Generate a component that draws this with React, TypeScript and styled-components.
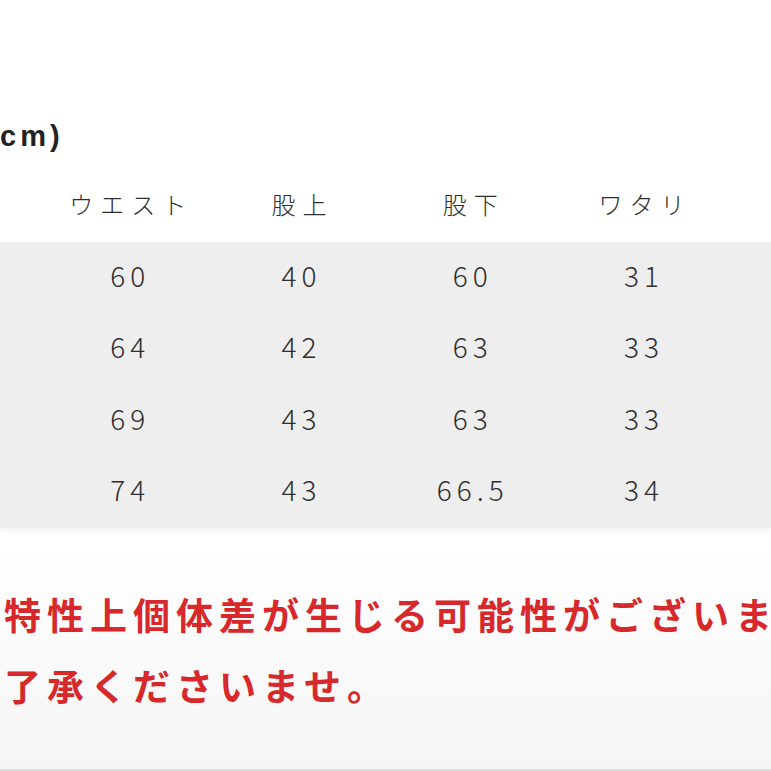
import React from "react";
import styled, { createGlobalStyle } from "styled-components";

const Global = createGlobalStyle`
  html, body { margin: 0; padding: 0; background: #ffffff; }
  body { font-family: "Noto Sans CJK JP", "Noto Sans", sans-serif; color: #333; }
`;

const Page = styled.div`
  width: 771px;
  height: 771px;
  overflow: hidden;
  display: flex;
  flex-direction: column;
  background: linear-gradient(to bottom, #ffffff 0px, #ffffff 540px, #f5f5f5 770px);
  border-bottom: 2px solid #dcdcdc;
  box-sizing: border-box;
`;

const Title = styled.h2`
  margin: 116px 0 0 0;
  height: 40px;
  line-height: 40px;
  font-family: "Liberation Sans", "Noto Sans CJK JP", sans-serif;
  font-size: 29px;
  font-weight: 700;
  letter-spacing: 4px;
  color: #222;
`;

const Grid = styled.div`
  display: grid;
  grid-template-columns: repeat(4, 171.3px);
  padding-left: 42px;
  align-items: center;
`;

const HeadRow = styled(Grid)`
  margin-top: 14px;
  height: 72px;
`;

const Band = styled.div`
  background: #eeeeee;
  height: 286px;
  display: grid;
  grid-template-rows: repeat(4, 1fr);
  box-shadow: 0 3px 6px rgba(0, 0, 0, 0.05);
`;

const Cell = styled.div<{ $head?: boolean }>`
  text-align: center;
  font-family: "Noto Sans CJK JP", "Noto Sans", sans-serif;
  font-size: ${(p) => (p.$head ? "24px" : "28px")};
  font-weight: 300;
  letter-spacing: ${(p) => (p.$head ? "7px" : "5px")};
  padding-left: ${(p) => (p.$head ? "7px" : "5px")};
  padding-bottom: 6px;
  color: #2e2e2e;
`;

const Note = styled.p`
  margin: 51px 0 0 4px;
  font-family: "Noto Sans CJK JP", sans-serif;
  font-size: 37px;
  font-weight: 700;
  line-height: 71px;
  letter-spacing: 6px;
  color: #d7282c;
  white-space: nowrap;
`;

const headers = ["ウエスト", "股上", "股下", "ワタリ"];
const rows = [
  ["60", "40", "60", "31"],
  ["64", "42", "63", "33"],
  ["69", "43", "63", "33"],
  ["74", "43", "66.5", "34"],
];

export default function App() {
  return (
    <>
      <Global />
      <Page>
        <Title>cm)</Title>
        <HeadRow>
          {headers.map((h) => (
            <Cell key={h} $head>
              {h}
            </Cell>
          ))}
        </HeadRow>
        <Band>
          {rows.map((r, i) => (
            <Grid key={i}>
              {r.map((v, j) => (
                <Cell key={j}>{v}</Cell>
              ))}
            </Grid>
          ))}
        </Band>
        <Note>
          特性上個体差が生じる可能性がございます
          <br />
          了承くださいませ。
        </Note>
      </Page>
    </>
  );
}
